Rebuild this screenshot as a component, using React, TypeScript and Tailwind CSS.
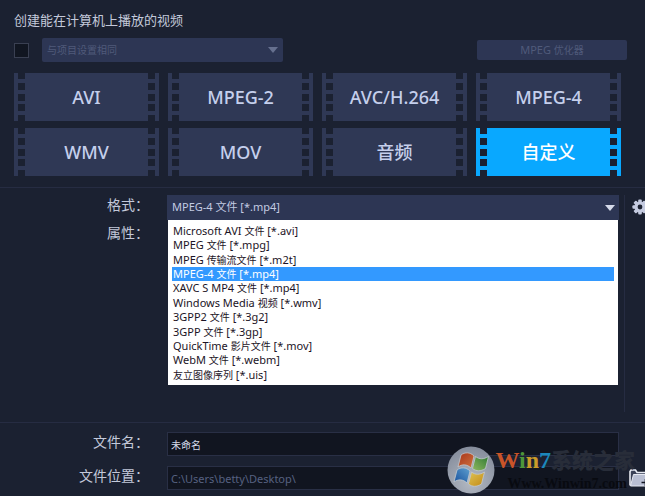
import { useState } from "react";
import clsx from "clsx";

const PRESETS = [
  "AVI",
  "MPEG-2",
  "AVC/H.264",
  "MPEG-4",
  "WMV",
  "MOV",
  "音频",
  "自定义",
];

const FORMATS = [
  "Microsoft AVI 文件 [*.avi]",
  "MPEG 文件 [*.mpg]",
  "MPEG 传输流文件 [*.m2t]",
  "MPEG-4 文件 [*.mp4]",
  "XAVC S MP4 文件 [*.mp4]",
  "Windows Media 视频 [*.wmv]",
  "3GPP2 文件 [*.3g2]",
  "3GPP 文件 [*.3gp]",
  "QuickTime 影片文件 [*.mov]",
  "WebM 文件 [*.webm]",
  "友立图像序列 [*.uis]",
];

// Chinese runs are set smaller than the Latin text beside them
function MixedText({ text }: { text: string }) {
  return (
    <>
      {text.split(/([\u4e00-\u9fff]+)/).map((part, index) =>
        index % 2 === 1 ? (
          <span key={index} className="text-[10px]">
            {part}
          </span>
        ) : (
          part
        ),
      )}
    </>
  );
}

function Arrow({ className }: { className: string }) {
  return (
    <svg
      viewBox="0 0 10 6"
      className={clsx(
        "pointer-events-none col-start-1 row-start-1 h-[6px] w-[10px] self-center justify-self-end",
        className,
      )}
      aria-hidden="true"
    >
      <path d="M0 0h10L5 6z" fill="currentColor" />
    </svg>
  );
}

// Perforated edge of a film frame
function Perforation() {
  return (
    <span className="flex w-[7px] flex-col justify-between" aria-hidden="true">
      <span className="h-[6px] bg-[#1b2131]" />
      <span className="h-[7px] bg-[#1b2131]" />
      <span className="h-[7px] bg-[#1b2131]" />
      <span className="h-[7px] bg-[#1b2131]" />
      <span className="h-[6px] bg-[#1b2131]" />
    </span>
  );
}

interface PresetButtonProps {
  label: string;
  active: boolean;
  onClick: () => void;
}

function PresetButton({ label, active, onClick }: PresetButtonProps) {
  return (
    <button
      type="button"
      aria-pressed={active}
      onClick={onClick}
      className={clsx(
        "flex h-12 px-1 text-lg font-medium",
        active ? "bg-[#09a8ff] text-white" : "bg-[#2f3855] text-[#c5cfec]",
      )}
    >
      <Perforation />
      <span className="flex-1 self-center">{label}</span>
      <Perforation />
    </button>
  );
}

function GearIcon() {
  return (
    <svg viewBox="0 0 16 16" className="size-4 shrink-0" aria-hidden="true">
      <g fill="#c5cbe0">
        <rect x="6.2" y="0.4" width="3.6" height="15.2" rx="1" />
        <rect x="6.2" y="0.4" width="3.6" height="15.2" rx="1" transform="rotate(45 8 8)" />
        <rect x="6.2" y="0.4" width="3.6" height="15.2" rx="1" transform="rotate(90 8 8)" />
        <rect x="6.2" y="0.4" width="3.6" height="15.2" rx="1" transform="rotate(135 8 8)" />
        <circle cx="8" cy="8" r="5.6" />
      </g>
      <circle cx="8" cy="8" r="2.4" fill="#1b2131" />
    </svg>
  );
}

function FolderIcon() {
  return (
    <svg viewBox="0 0 24 20" className="h-5 w-6 shrink-0" aria-hidden="true">
      <path
        d="M1 17.5V3.5L2 2h4.500L8 4.500h14V7"
        fill="#3a4157"
        stroke="#e6e9f2"
        strokeWidth="1.6"
      />
      <path d="M4.500 6.500H24v11.500H1.500z" fill="#b9bfd3" stroke="#e6e9f2" />
      <path d="M12.500 14.500h8M16.500 11v7" stroke="#111520" strokeWidth="1.6" />
    </svg>
  );
}

function WindowsOrb() {
  return (
    <svg viewBox="0 0 48 48" className="size-12 shrink-0" aria-hidden="true">
      <defs>
        <radialGradient id="orb" cx="50%" cy="75%" r="75%">
          <stop offset="0" stopColor="#b4bac4" />
          <stop offset="0.6" stopColor="#979eab" />
          <stop offset="1" stopColor="#858c9b" />
        </radialGradient>
        <linearGradient id="orb-red" x1="0" y1="0" x2="1" y2="1">
          <stop offset="0" stopColor="#a83418" />
          <stop offset="1" stopColor="#cf7340" />
        </linearGradient>
        <linearGradient id="orb-green" x1="1" y1="0" x2="0" y2="1">
          <stop offset="0" stopColor="#2f7a33" />
          <stop offset="1" stopColor="#8fb860" />
        </linearGradient>
        <linearGradient id="orb-blue" x1="0" y1="1" x2="1" y2="0">
          <stop offset="0" stopColor="#17509c" />
          <stop offset="1" stopColor="#5fa0d0" />
        </linearGradient>
        <linearGradient id="orb-yellow" x1="1" y1="1" x2="0" y2="0">
          <stop offset="0" stopColor="#c48a14" />
          <stop offset="1" stopColor="#dec355" />
        </linearGradient>
      </defs>
      <circle cx="24" cy="24" r="23.5" fill="url(#orb)" />
      <g stroke="#c3c9cf" strokeWidth="0.8">
        <path d="M14 9c4-3 9-3 13 1l-3 12c-4-4-9-4-13-1z" fill="url(#orb-red)" />
        <path d="M28.500 10.500c4 3 8 3 13 0l-3 12c-5 3-9 3-13 0z" fill="url(#orb-green)" />
        <path d="M10 24c4-3 9-3 13 1l-3 12c-4-4-9-4-13-1z" fill="url(#orb-blue)" />
        <path d="M24.500 26c4 3 8 3 13 0l-3 12c-5 3-9 3-13 0z" fill="url(#orb-yellow)" />
      </g>
    </svg>
  );
}

function Watermark() {
  return (
    <div className="pointer-events-none absolute right-[10px] bottom-[2px] flex">
      <WindowsOrb />
      <div className="flex flex-col whitespace-nowrap">
        <div className="flex h-7 items-center">
          <span className="font-['Liberation_Serif',serif] text-2xl leading-7 font-bold">
            <span className="text-[#c95428]">W</span>
            <span className="text-[#4d963a]">i</span>
            <span className="text-[#c99b2a]">n</span>
            <span className="text-[#1b88bc]">7</span>
          </span>
          <span className="text-[21px] leading-7 font-black text-[#282d39]">
            系统之家
          </span>
        </div>
        <span className="pl-3 font-['Liberation_Serif',serif] text-sm leading-5 font-bold text-[#080a10]">
          Www.Winwin7.com
        </span>
      </div>
    </div>
  );
}

export default function App() {
  const [preset, setPreset] = useState("自定义");
  const [format, setFormat] = useState("MPEG-4 文件 [*.mp4]");
  const [fileName, setFileName] = useState("未命名");

  return (
    <main className="relative min-h-screen overflow-hidden bg-[#1b2131] font-['Noto_Sans','Noto_Sans_CJK_SC',sans-serif] text-[#c3c9da]">
      <section className="border-b border-[#262c42] pt-[10px] pr-6 pb-[11px] pl-[14px]">
        <h1 className="text-[13px] leading-5">创建能在计算机上播放的视频</h1>

        <div className="mt-2 flex items-center">
          <input
            type="checkbox"
            aria-label="与项目设置相同"
            className="size-[15px] appearance-none border border-[#3a4052] bg-[#111621] checked:bg-[#09a8ff]"
          />
          <div className="ml-[13px] grid w-[241px]">
            <select
              disabled
              aria-label="项目设置"
              className="col-start-1 row-start-1 h-6 appearance-none rounded-xs bg-[#2d3654] pl-[5px] text-[10px] text-[#505a7a]"
            >
              <option>与项目设置相同</option>
            </select>
            <Arrow className="mr-[5px] text-[#66708f]" />
          </div>
          <button
            type="button"
            disabled
            className="-mr-[6px] ml-auto h-5 w-[150px] rounded-xs bg-[#2d3654] text-[11px] text-[#505a7a]"
          >
            <MixedText text="MPEG 优化器" />
          </button>
        </div>

        <div className="mt-[11px] grid grid-cols-4 gap-x-[9px] gap-y-[7px]">
          {PRESETS.map((label) => (
            <PresetButton
              key={label}
              label={label}
              active={label === preset}
              onClick={() => setPreset(label)}
            />
          ))}
        </div>
      </section>

      <section className="flex h-[235px] border-b border-[#262c42] pt-[7px] pb-[10px]">
        <div className="flex w-[167px] flex-col gap-2 pr-[18px] text-right text-sm leading-5">
          <label htmlFor="format">格式：</label>
          <span>属性：</span>
        </div>
        <div className="relative flex-1">
          <div className="grid">
            <select
              id="format"
              value={format}
              onChange={(event) => setFormat(event.target.value)}
              className="col-start-1 row-start-1 h-[25px] appearance-none bg-[#2d3654] pl-[5px] text-[11px] text-[#c3cbe2]"
            >
              {FORMATS.map((name) => (
                <option key={name}>{name}</option>
              ))}
            </select>
            <Arrow className="mr-1 text-[#d5daea]" />
          </div>
          <ul
            role="listbox"
            aria-label="格式"
            className="absolute top-[25px] right-0 left-0 mr-[1px] ml-[1px] grid h-[165px] auto-rows-fr bg-white px-1 pt-1 pb-[3px] text-[11px] text-[#1c1426]"
          >
            {FORMATS.map((name) => (
              <li
                key={name}
                role="option"
                aria-selected={name === format}
                onClick={() => setFormat(name)}
                className={clsx(
                  "pl-[1px] leading-[14px] whitespace-nowrap",
                  name === format && "bg-[#3399ff] text-white",
                )}
              >
                <MixedText text={name} />
              </li>
            ))}
          </ul>
        </div>
        <div className="ml-[5px] flex w-[21px] items-start border-l border-[#262c42] pt-1 pl-[7px]">
          <button type="button" aria-label="设置">
            <GearIcon />
          </button>
        </div>
      </section>

      <section className="grid grid-cols-[167px_1fr_26px] gap-y-[10px] pt-[9px] pb-[6px]">
        <label htmlFor="file-name" className="pr-[18px] text-right text-sm leading-5">
          文件名：
        </label>
        <input
          id="file-name"
          value={fileName}
          onChange={(event) => setFileName(event.target.value)}
          className="h-6 border border-[#292f45] bg-[#111520] px-[3px] text-[10px] text-[#d5daea]"
        />
        <span />
        <label htmlFor="file-path" className="pr-[18px] text-right text-sm leading-5">
          文件位置：
        </label>
        <input
          id="file-path"
          readOnly
          value="C:\Users\betty\Desktop\"
          className="h-6 border border-[#292f45] bg-[#111520] px-[3px] text-[11px] text-[#566180]"
        />
        <button type="button" aria-label="浏览" className="flex items-center pl-[10px]">
          <FolderIcon />
        </button>
      </section>

      <Watermark />
    </main>
  );
}
